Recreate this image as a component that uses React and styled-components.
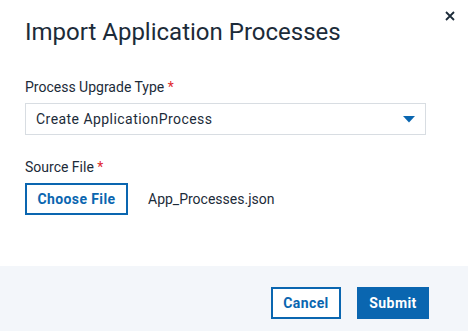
import React from 'react';
import styled, { createGlobalStyle } from 'styled-components';

const GlobalStyle = createGlobalStyle`
  html, body {
    margin: 0;
    padding: 0;
    background: #ffffff;
  }
  body {
    font-family: Roboto, 'Liberation Sans', sans-serif;
    color: #1c2b39;
  }
`;

function App() {
  return (
    <>
      <GlobalStyle />
      <Dialog>
        <Body>
          <CloseButton aria-label='Close'>
            <svg width='10' height='10' viewBox='0 0 10 10'>
              <path d='M1 1 L9 9 M9 1 L1 9' stroke='#1c2b39' strokeWidth='1.8' />
            </svg>
          </CloseButton>
          <Title>Import Application Processes</Title>
          <Field>
            <Label>
              Process Upgrade Type <Required>*</Required>
            </Label>
            <Select>
              <span>Create ApplicationProcess</span>
              <svg width='12' height='7' viewBox='0 0 12 7'>
                <path d='M0 0 H12 L6 6.5 Z' fill='#0a66b0' />
              </svg>
            </Select>
          </Field>
          <Field $gap={22}>
            <Label>
              Source File <Required>*</Required>
            </Label>
            <FileRow>
              <OutlineButton>Choose File</OutlineButton>
              <FileName>App_Processes.json</FileName>
            </FileRow>
          </Field>
        </Body>
        <Footer>
          <OutlineButton $width={70}>Cancel</OutlineButton>
          <SolidButton>Submit</SolidButton>
        </Footer>
      </Dialog>
    </>
  );
}

export default App;

const Dialog = styled.div`
  width: 468px;
  height: 331px;
  display: flex;
  flex-direction: column;
  background: #ffffff;
  overflow: hidden;
`;

const Body = styled.div`
  position: relative;
  flex: 1;
  padding: 18px 42px 0 25px;
`;

const CloseButton = styled.button`
  position: absolute;
  top: 9px;
  right: 11px;
  width: 14px;
  height: 14px;
  padding: 0;
  border: none;
  background: none;
  display: flex;
  align-items: center;
  justify-content: center;
  cursor: pointer;
`;

const Title = styled.h1`
  margin: 0;
  font-size: 24px;
  line-height: 28px;
  font-weight: 400;
  color: #1c2b39;
`;

const Field = styled.div`
  margin-top: ${({ $gap }) => ($gap ? `${$gap}px` : '31px')};
  display: flex;
  flex-direction: column;
  gap: 6px;
`;

const Label = styled.div`
  font-size: 14px;
  line-height: 20px;
  color: #1c2b39;
`;

const Required = styled.span`
  color: #e0282e;
`;

const Select = styled.div`
  height: 32px;
  box-sizing: border-box;
  border: 1px solid #d8dde2;
  display: flex;
  align-items: center;
  justify-content: space-between;
  padding: 0 10px 0 10px;
  font-size: 14px;
  letter-spacing: 0.45px;
  color: #1c2b39;
`;

const FileRow = styled.div`
  display: flex;
  align-items: center;
  gap: 20px;
`;

const OutlineButton = styled.button`
  height: 32px;
  box-sizing: border-box;
  ${({ $width }) => ($width ? `width: ${$width}px;` : 'width: 103px;')}
  padding: 0;
  border: 2px solid #0a66b0;
  background: #ffffff;
  color: #0a66b0;
  font-family: Roboto, 'Liberation Sans', sans-serif;
  font-size: 14px;
  font-weight: 700;
  letter-spacing: 0.4px;
  cursor: pointer;
`;

const FileName = styled.span`
  font-size: 14px;
  color: #1c2b39;
`;

const Footer = styled.div`
  height: 65px;
  box-sizing: border-box;
  background: #f3f6fa;
  display: flex;
  justify-content: flex-end;
  align-items: flex-start;
  gap: 16px;
  padding: 21px 39px 0 0;
`;

const SolidButton = styled.button`
  height: 32px;
  width: 72px;
  padding: 0;
  border: none;
  background: #0a66b0;
  color: #ffffff;
  font-family: Roboto, 'Liberation Sans', sans-serif;
  font-size: 14px;
  font-weight: 700;
  letter-spacing: 0.4px;
  cursor: pointer;
`;
